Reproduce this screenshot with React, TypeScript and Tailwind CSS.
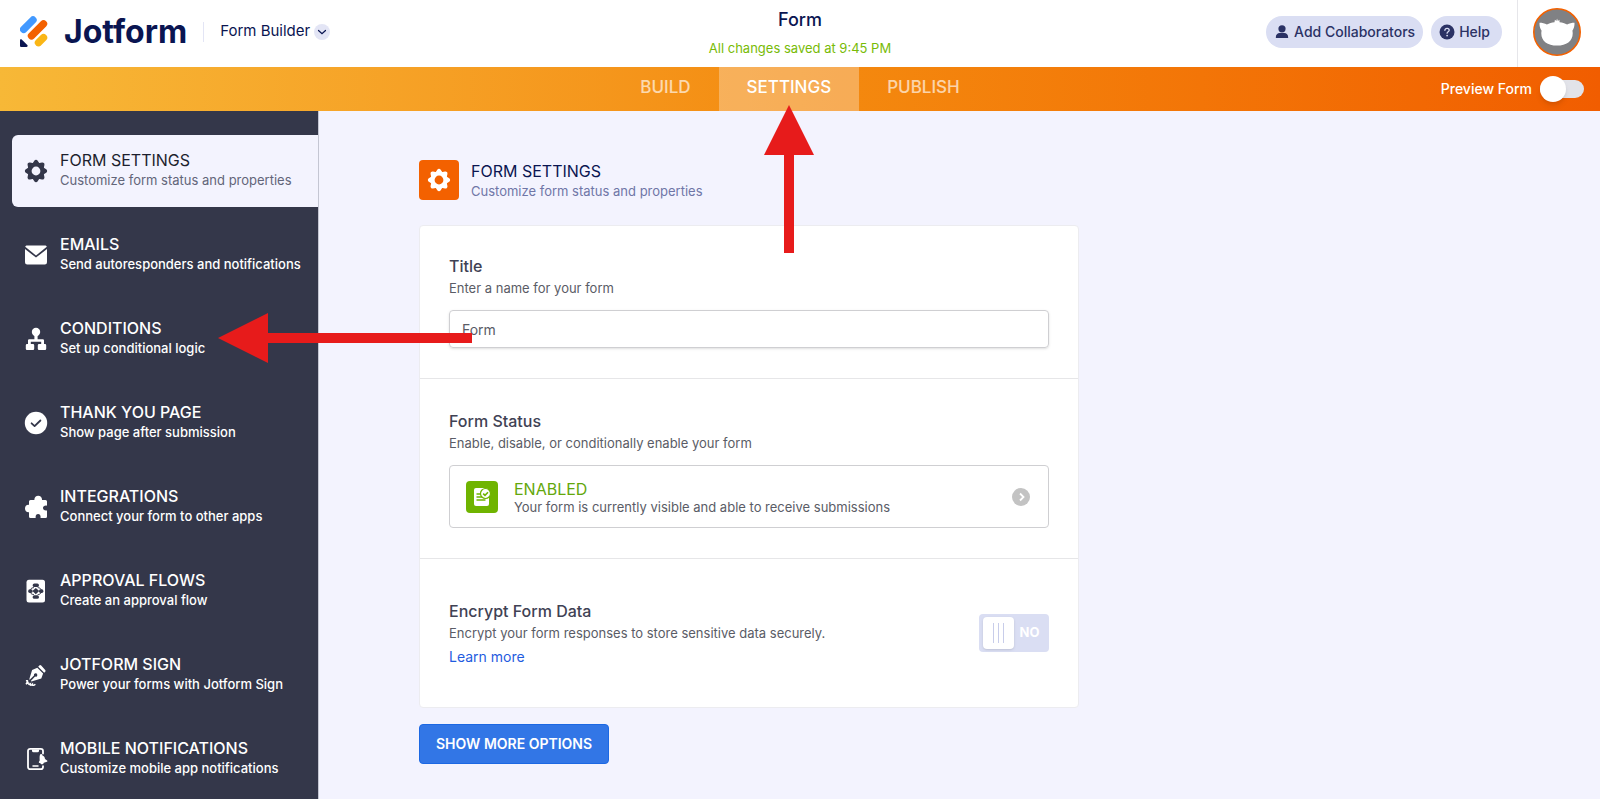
import { useState } from "react";

function GearIcon({ hole }: { hole?: string }) {
  return (
    <svg viewBox="0 0 24 24" className="size-6" fill="currentColor">
      {[0, 45, 90, 135].map((angle) => (
        <path
          key={angle}
          d="M8.200 5L10.300 1.800a2 2 0 0 1 3.400 0L15.800 5v14l-2.100 3.200a2 2 0 0 1-3.400 0L8.200 19z"
          transform={`rotate(${angle} 12 12)`}
        />
      ))}
      <circle cx="12" cy="12" r="8.4" />
      <circle cx="12" cy="12" r="4.400" fill={hole} />
    </svg>
  );
}

function MailIcon() {
  return (
    <svg viewBox="0 0 24 24" className="size-6" fill="currentColor">
      <path d="M3.2 2.5h17.6c1 0 1.700.5 2 1.200L12 12.6 1.2 3.700c.3-.7 1-1.200 2-1.200z" />
      <path d="M1 6l11 8.600L23 6v13.300a2.200 2.200 0 0 1-2.200 2.200H3.200A2.200 2.200 0 0 1 1 19.300z" />
    </svg>
  );
}

function ConditionsIcon() {
  return (
    <svg viewBox="0 0 24 24" className="size-6" fill="currentColor">
      <circle cx="12" cy="5" r="4.2" />
      <path d="M10.4 8h3.2v4.200h5.2a1.200 1.200 0 0 1 1.200 1.200V17h1a1.200 1.200 0 0 1 1.200 1.200v3.600A1.200 1.200 0 0 1 21 23h-6a1.200 1.200 0 0 1-1.200-1.200v-3.600A1.200 1.200 0 0 1 15 17h2.200v-2.200H6.800V17H9a1.200 1.200 0 0 1 1.200 1.200v3.600A1.200 1.200 0 0 1 9 23H3a1.200 1.200 0 0 1-1.200-1.200v-3.600A1.200 1.200 0 0 1 3 17h1v-3.600a1.200 1.200 0 0 1 1.200-1.200h5.200z" />
    </svg>
  );
}

function CheckIcon() {
  return (
    <svg viewBox="0 0 24 24" className="size-6">
      <circle cx="12" cy="12" r="11.200" fill="currentColor" />
      <path
        d="M7.600 12.300l3 2.800 5.800-5.600"
        fill="none"
        stroke="#34374a"
        strokeWidth="1.800"
        strokeLinecap="round"
        strokeLinejoin="round"
      />
    </svg>
  );
}

function PuzzleIcon() {
  return (
    <svg viewBox="0 0 24 24" className="size-6" fill="currentColor">
      <path d="M6.500 5h3.900C10.200 2.500 12 .700 14.200.700S18.200 2.500 18 5h3.500A1.500 1.500 0 0 1 23 6.500v4.200c-2.400-.4-4 .6-4 2.400s1.600 2.800 4 2.400v6A1.500 1.500 0 0 1 21.500 23h-5c.4-2.300-.6-3.900-2.400-3.900s-2.800 1.600-2.400 3.900H6.500A1.500 1.500 0 0 1 5 21.500v-4.300c-2.500.2-4-1.500-4-3.700s1.500-3.900 4-3.600V6.500A1.500 1.500 0 0 1 6.500 5z" />
    </svg>
  );
}

function ApprovalIcon() {
  return (
    <svg viewBox="0 0 24 24" className="size-6">
      <rect x="2.500" y="0.800" width="18.500" height="22.600" rx="2.500" fill="currentColor" />
      <g fill="#34374a">
        <rect x="8.700" y="4.500" width="6.200" height="3.600" rx="1.600" />
        <rect x="8.700" y="16.200" width="6.200" height="3.600" rx="1.600" />
        <path d="M11.800 9l3.400 3.100-3.400 3.100-3.400-3.100z" />
        <rect x="4.200" y="10.300" width="4.400" height="3.600" rx="1.600" />
        <rect x="15" y="10.300" width="4.400" height="3.600" rx="1.600" />
      </g>
      <path
        d="M6.500 10.500c.6-1.200 1.800-1.800 3.400-1.900M17.100 10.500c-.6-1.200-1.800-1.800-3.400-1.900M6.500 13.700c.6 1.200 1.800 1.800 3.400 1.900M17.100 13.700c-.6 1.200-1.800 1.800-3.400 1.900"
        fill="none"
        stroke="#34374a"
      />
    </svg>
  );
}

function SignIcon() {
  return (
    <svg viewBox="0 0 24 24" className="size-6">
      <path
        d="M15.300 2.600a1.300 1.300 0 0 1 1.900 0l4 4.300a1.300 1.300 0 0 1 0 1.800l-1 1-6-6z"
        fill="currentColor"
      />
      <path
        d="M13.300 4.800l5.800 5.800-1.800 4.800-9.900 3.100-.6-.6 4.300-4.300a1.700 1.700 0 1 0-1.100-1.100l-4.300 4.200-.4-.4 2.800-9.300z"
        fill="currentColor"
      />
      <path
        d="M2.600 17.800c1.200-.3 1.300.6.500 1.600l-1 1.700c1.400-1 2.900-1.700 2.700-.4-.2 1 .7 1 1.500.3-.2 1.600 1 1.300 2 .4-.1 1.300 1 1.200 2.600.2"
        fill="none"
        stroke="currentColor"
        strokeWidth="1.500"
        strokeLinecap="round"
      />
    </svg>
  );
}

function MobileIcon() {
  return (
    <svg viewBox="0 0 24 24" className="size-6">
      <path
        d="M19 6.500V4a2.200 2.200 0 0 0-2.200-2.200H6.200A2.200 2.200 0 0 0 4 4v16a2.200 2.200 0 0 0 2.200 2.200h10.600A2.200 2.200 0 0 0 19 20v-.8"
        fill="none"
        stroke="currentColor"
        strokeWidth="1.800"
        strokeLinecap="round"
      />
      <path d="M8 2.500h7v1.300a1.500 1.500 0 0 1-1.500 1.500h-4A1.500 1.500 0 0 1 8 3.800z" fill="currentColor" />
      <path d="M9 19h5" stroke="currentColor" strokeWidth="1.500" strokeLinecap="round" />
      <path
        d="M17 7c.8 0 1.300.7 1.500 1.600 1.500.7 2.400 1.800 2.500 3.400l2.100 1.600c.5.400.4 1-.2 1.200l-3.100.9c-.4 1-1.100 1.700-2 1.600-.8 0-1.300-.6-1.500-1.300-.8.200-1.500-.2-1.500-.9l.9-1.600c-.2-2.700-.3-6.400 1.300-6.500z"
        fill="currentColor"
      />
    </svg>
  );
}

const menuItems = [
  {
    title: "FORM SETTINGS",
    description: "Customize form status and properties",
    icon: <GearIcon hole="#f3f3fe" />,
  },
  {
    title: "EMAILS",
    description: "Send autoresponders and notifications",
    icon: <MailIcon />,
  },
  {
    title: "CONDITIONS",
    description: "Set up conditional logic",
    icon: <ConditionsIcon />,
  },
  {
    title: "THANK YOU PAGE",
    description: "Show page after submission",
    icon: <CheckIcon />,
  },
  {
    title: "INTEGRATIONS",
    description: "Connect your form to other apps",
    icon: <PuzzleIcon />,
  },
  {
    title: "APPROVAL FLOWS",
    description: "Create an approval flow",
    icon: <ApprovalIcon />,
  },
  {
    title: "JOTFORM SIGN",
    description: "Power your forms with Jotform Sign",
    icon: <SignIcon />,
  },
  {
    title: "MOBILE NOTIFICATIONS",
    description: "Customize mobile app notifications",
    icon: <MobileIcon />,
  },
];

function Header() {
  return (
    <header className="grid h-[67px] grid-cols-[1fr_auto_1fr] bg-white">
      <div className="flex items-center pb-1 pl-5">
        <a href="#" className="flex items-center gap-4 text-[#0a1551]">
          <svg viewBox="0 0 28 31" className="h-[31px] w-7">
            <g fill="none" strokeWidth="7.400" strokeLinecap="round">
              <path d="M3.700 13.300L13 4" stroke="#4299ff" />
              <path d="M11.500 19.800L23.500 7.800" stroke="#f36100" />
              <path d="M18.500 26.700L23.500 21.700" stroke="#fab616" />
            </g>
            <path
              d="M0 24.200c0-1 1-1.400 1.700-.7l5.600 5.600c.7.700.2 1.900-.8 1.900H1.300C.6 31 0 30.400 0 29.700z"
              fill="#0a1551"
            />
          </svg>
          <span className="text-[32px] leading-8 font-bold">Jotform</span>
        </a>
        <span className="mx-4 h-5 w-px bg-[#e3e5f5]" />
        <button type="button" className="flex items-center gap-1 text-[15px] text-[#0a1551]">
          Form Builder
          <span className="flex size-4 items-center justify-center rounded-full bg-[#e3e5f5]">
            <svg viewBox="0 0 10 10" className="size-2.5">
              <path
                d="M1.500 3.500L5 6.800l3.500-3.300"
                fill="none"
                stroke="#0a1551"
                strokeWidth="1.200"
                strokeLinecap="round"
              />
            </svg>
          </span>
        </button>
      </div>

      <div className="flex flex-col items-center gap-1 pt-2">
        <h1 className="text-lg leading-6 font-medium text-[#0a1551]">Form</h1>
        <p className="text-[13px] leading-6 text-[#78bb07]">All changes saved at 9:45 PM</p>
      </div>

      <div className="flex items-center justify-end">
        <div className="flex gap-2 pr-[15px] pb-1">
          <button
            type="button"
            className="flex h-8 items-center gap-1 rounded-full bg-[#dadef3] px-2 text-sm font-medium text-[#2b3265]"
          >
            <svg viewBox="0 0 16 16" className="size-4" fill="currentColor">
              <circle cx="8" cy="4.800" r="3.600" />
              <path d="M1.800 13.500c0-3 1.600-4.500 4-4.500h4.400c2.400 0 4 1.500 4 4.500a.6.6 0 0 1-.6.600H2.400a.6.6 0 0 1-.6-.6z" />
            </svg>
            Add Collaborators
          </button>
          <button
            type="button"
            className="flex h-8 items-center gap-1 rounded-full bg-[#dadef3] pr-3 pl-2 text-sm font-medium text-[#2b3265]"
          >
            <svg viewBox="0 0 16 16" className="size-4">
              <circle cx="8" cy="8" r="7.500" fill="currentColor" />
              <path
                d="M5.900 6.300C6 5 6.900 4.300 8.100 4.300s2.100.8 2.100 1.900c0 1.500-2.100 1.500-2.100 3"
                fill="none"
                stroke="#dadef3"
                strokeWidth="1.300"
                strokeLinecap="round"
              />
              <circle cx="8.100" cy="11.600" r="0.900" fill="#dadef3" />
            </svg>
            Help
          </button>
        </div>
        <div className="flex h-full items-center border-l border-[#e6e6ea] pr-[19px] pb-1 pl-[15px]">
          <button type="button" aria-label="Account">
            <svg viewBox="0 0 48 48" className="size-12">
              <circle cx="24" cy="24" r="23.200" fill="#808184" stroke="#f36100" strokeWidth="1.600" />
              <path
                d="M6.500 14.800c2.700 0 5.200.6 7.400 1.800 2.300-1.300 4.900-2 7.600-2.300l.4-2.500 1.500 1.300.6-2.600.9 2.600 1.500-1.300.2 2.500c2.700.3 5.200 1 7.500 2.300 2.200-1.200 4.700-1.800 7.400-1.800.2 3.200-.7 6-2.100 8 .2.900.3 1.700.3 2.600C39.700 33 33.400 37.600 24 37.600S8.300 33 8.300 25.400c0-.9.1-1.700.3-2.600-1.400-2-2.300-4.800-2.100-8z"
                fill="#fff"
              />
            </svg>
          </button>
        </div>
      </div>
    </header>
  );
}

function TopNav() {
  const [preview, setPreview] = useState(false);

  return (
    <nav className="grid h-11 grid-cols-[1fr_auto_1fr] bg-linear-to-r from-[#f7b837] via-[#f48b0f] to-[#f15d00]">
      <span />
      <div className="flex text-[17px] font-medium">
        <a href="#build" className="flex items-center px-7 pb-0.5 text-white/65">
          BUILD
        </a>
        <a href="#settings" className="relative flex items-center bg-white/30 px-7 pb-0.5 text-white">
          SETTINGS
          <svg
            viewBox="0 0 50 148"
            className="pointer-events-none absolute top-[38px] left-1/2 z-10 h-[148px] w-[50px] -translate-x-1/2"
            fill="#e71b1b"
          >
            <path d="M25 0l25 50H30v98H20V50H0z" />
          </svg>
        </a>
        <a href="#publish" className="flex items-center px-7 pb-0.5 text-white/65">
          PUBLISH
        </a>
      </div>
      <label className="flex items-center justify-end gap-2 pr-4 text-sm font-medium text-white">
        Preview Form
        <input
          type="checkbox"
          className="peer sr-only"
          checked={preview}
          onChange={(e) => setPreview(e.target.checked)}
        />
        <span className="flex h-[18px] w-11 items-center rounded-full bg-[#e2e3e9] peer-checked:justify-end">
          <span className="size-[26px] rounded-full bg-white shadow-md" />
        </span>
      </label>
    </nav>
  );
}

function Sidebar() {
  return (
    <aside className="w-[319px] shrink-0 border-r border-[#c4c6d3] bg-[#34374a] pt-6 pl-3">
      <ul className="flex flex-col gap-3">
        {menuItems.map((item, index) => (
          <li key={item.title} className="relative">
            <a
              href="#"
              className={
                index === 0
                  ? "flex h-[72px] items-center gap-3 rounded-l-md bg-[#f3f3fe] pl-3 text-[#34374a]"
                  : "flex h-[72px] items-center gap-3 pl-3 font-medium text-white"
              }
            >
              {item.icon}
              <span className="flex flex-col pb-0.5 whitespace-nowrap">
                <span
                  className={
                    index === 0 ? "text-base leading-5 text-[#1d1f2e]" : "text-base leading-5"
                  }
                >
                  {item.title}
                </span>
                <span
                  className={
                    index === 0 ? "text-[13px] leading-5 text-[#626579]" : "text-[13px] leading-5"
                  }
                >
                  {item.description}
                </span>
              </span>
            </a>
            {item.title === "CONDITIONS" && (
              <svg
                viewBox="0 0 254 50"
                className="pointer-events-none absolute top-2.5 left-[206px] z-10 h-[50px] w-[254px]"
                fill="#e71b1b"
              >
                <path d="M0 25L50 0v20h204v10H50v20z" />
              </svg>
            )}
          </li>
        ))}
      </ul>
    </aside>
  );
}

function SettingsPanel() {
  const [title, setTitle] = useState("Form");
  const [encrypted, setEncrypted] = useState(false);

  return (
    <main className="min-w-0 flex-1 px-[100px] pt-12 pb-9">
      <div className="max-w-[660px]">
        <div className="flex items-center gap-3">
          <span className="flex size-10 items-center justify-center rounded bg-[#f36100] text-white">
            <GearIcon hole="#f36100" />
          </span>
          <div className="pt-0.5">
            <h2 className="text-base leading-5 text-[#0a1551]">FORM SETTINGS</h2>
            <p className="text-[13px] leading-5 text-[#6f76a7]">
              Customize form status and properties
            </p>
          </div>
        </div>

        <div className="mt-6 rounded-sm border border-[#ececf0] bg-white text-[13px] text-[#5a5c66]">
          <section className="px-[29px] pt-7 pb-[30px]">
            <label htmlFor="form-title" className="block text-base leading-6 font-medium text-[#3f4254]">
              Title
            </label>
            <p className="leading-5">Enter a name for your form</p>
            <input
              id="form-title"
              type="text"
              value={title}
              onChange={(e) => setTitle(e.target.value)}
              className="mt-3 block h-[38px] w-full rounded border border-[#cfcfd2] px-3 text-sm shadow-sm"
            />
          </section>

          <section className="border-t border-[#e6e6e8] px-[29px] py-[30px]">
            <h3 className="text-base leading-6 font-medium text-[#3f4254]">Form Status</h3>
            <p className="leading-5">Enable, disable, or conditionally enable your form</p>
            <button
              type="button"
              className="mt-3 flex h-[63px] w-full items-center rounded border border-[#cfcfd2] pr-[18px] pl-4 text-left"
            >
              <span className="flex size-8 items-center justify-center rounded bg-[#6fb400]">
                <svg viewBox="0 0 20 20" className="size-5">
                  <path d="M4 1h8l5 8v8a2 2 0 0 1-2 2H4a2 2 0 0 1-2-2V3a2 2 0 0 1 2-2z" fill="#fff" />
                  <path d="M5 7h4M5 10h5M5 13h8" stroke="#6fb400" strokeWidth="1.400" strokeLinecap="round" />
                  <circle cx="13.500" cy="6.500" r="5" fill="#fff" stroke="#6fb400" strokeWidth="1.200" />
                  <path d="M11.200 6.600l1.800 1.700 3-3" fill="none" stroke="#6fb400" strokeWidth="1.600" />
                </svg>
              </span>
              <span className="ml-4 flex flex-1 flex-col">
                <span className="text-base leading-5 text-[#64a70b]">ENABLED</span>
                <span className="leading-4">
                  Your form is currently visible and able to receive submissions
                </span>
              </span>
              <svg viewBox="0 0 18 18" className="size-[18px]">
                <circle cx="9" cy="9" r="9" fill="#c3c3c3" />
                <path d="M8 5.500L11.500 9 8 12.500" fill="none" stroke="#fff" strokeWidth="1.800" />
              </svg>
            </button>
          </section>

          <section className="flex items-center justify-between border-t border-[#e6e6e8] px-[29px] py-10">
            <div>
              <h3 className="text-base leading-6 font-medium text-[#3f4254]">Encrypt Form Data</h3>
              <p className="leading-5">
                Encrypt your form responses to store sensitive data securely.
              </p>
              <a href="#" className="mt-1 block text-sm leading-5 text-[#1f5ce0]">
                Learn more
              </a>
            </div>
            <label className="flex h-[38px] w-[70px] items-center rounded bg-[#dadef3] p-1 text-white">
              <input
                type="checkbox"
                aria-label="Encrypt Form Data"
                className="sr-only"
                checked={encrypted}
                onChange={(e) => setEncrypted(e.target.checked)}
              />
              <span className="flex h-8 w-[31px] items-center justify-center gap-1 rounded-sm bg-white shadow">
                <span className="h-5 w-px bg-[#c8cdea]" />
                <span className="h-5 w-px bg-[#c8cdea]" />
                <span className="h-5 w-px bg-[#c8cdea]" />
              </span>
              <span className="flex-1 text-center text-[13px] font-bold">
                {encrypted ? "YES" : "NO"}
              </span>
            </label>
          </section>
        </div>

        <button
          type="button"
          className="mt-4 h-10 rounded border border-[#1c68e3] bg-[#3276e6] px-4 text-sm font-semibold text-white"
        >
          SHOW MORE OPTIONS
        </button>
      </div>
    </main>
  );
}

export default function App() {
  return (
    <div className="flex min-h-screen flex-col bg-[#f3f3fe] font-['Inter','Liberation_Sans',sans-serif]">
      <Header />
      <TopNav />
      <div className="flex flex-1">
        <Sidebar />
        <SettingsPanel />
      </div>
    </div>
  );
}
